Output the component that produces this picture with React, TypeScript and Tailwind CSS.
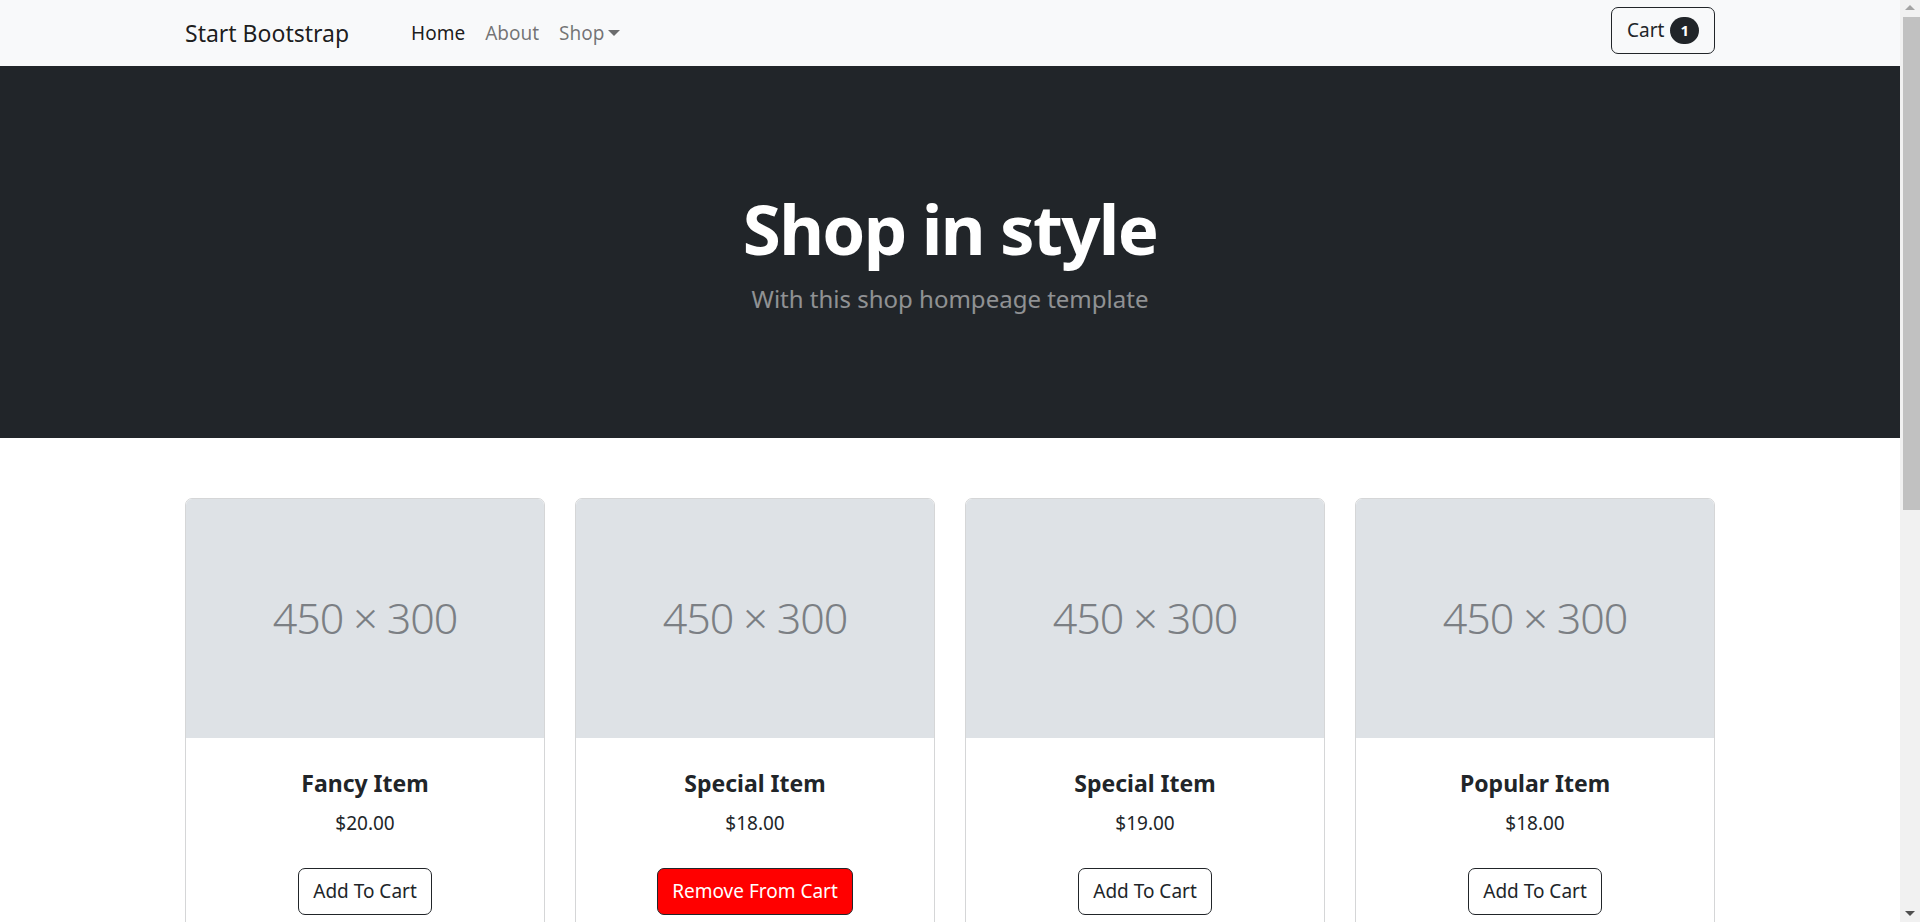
import { useState } from "react";

type Product = {
  id: number;
  name: string;
  price: number;
};

const products: Product[] = [
  { id: 1, name: "Fancy Item", price: 20 },
  { id: 2, name: "Special Item", price: 18 },
  { id: 3, name: "Special Item", price: 19 },
  { id: 4, name: "Popular Item", price: 18 },
  { id: 5, name: "Sale Item", price: 25 },
  { id: 6, name: "Fancy Product", price: 40 },
  { id: 7, name: "Sale Item", price: 18 },
  { id: 8, name: "Popular Item", price: 40 },
];

const font = { fontFamily: '"Noto Sans", "Segoe UI", sans-serif' };

function ProductCard({
  product,
  inCart,
  onToggle,
}: {
  product: Product;
  inCart: boolean;
  onToggle: () => void;
}) {
  return (
    <div className="flex flex-col rounded-[7px] border border-[#d5d6d7] bg-white overflow-hidden">
      <div className="h-[239px] bg-[#dee2e6] flex items-center justify-center">
        <span className="text-[43px] font-light text-[#7b7f84] tracking-tight">450 × 300</span>
      </div>
      <div className="p-[30px] text-center">
        <h5 className="text-[23px] leading-[30px] font-bold text-[#212529] mb-[10px]">{product.name}</h5>
        <div className="text-[19px] leading-[30px] text-[#212529]">${product.price.toFixed(2)}</div>
      </div>
      <div className="px-[30px] pb-[30px] text-center">
        {inCart ? (
          <button
            onClick={onToggle}
            className="h-[47px] px-[14px] rounded-[7px] border border-[#212529] bg-[#ff0000] text-white text-[19px]"
          >
            Remove From Cart
          </button>
        ) : (
          <button
            onClick={onToggle}
            className="h-[47px] px-[14px] rounded-[7px] border border-[#212529] bg-transparent text-[#212529] text-[19px] hover:bg-[#212529] hover:text-white"
          >
            Add To Cart
          </button>
        )}
      </div>
    </div>
  );
}

// the window scrollbar that shows in the screenshot
function Scrollbar() {
  return (
    <div className="fixed top-0 right-0 w-[20px] h-screen bg-[#f1f1f1] flex flex-col items-center">
      <svg width="10" height="5" viewBox="0 0 10 5" className="mt-[5px] shrink-0">
        <path d="M0 5 L5 0 L10 5 Z" fill="#a3a3a3" />
      </svg>
      <div className="mt-[7px] w-[17px] ml-[2px] h-[493px] bg-[#c1c1c1]" />
      <svg width="10" height="5" viewBox="0 0 10 5" className="mt-auto mb-[6px] shrink-0">
        <path d="M0 0 L10 0 L5 5 Z" fill="#505050" />
      </svg>
    </div>
  );
}

export default function App() {
  const [cart, setCart] = useState<number[]>([2]);

  const toggle = (id: number) => {
    setCart((prev) => (prev.includes(id) ? prev.filter((x) => x !== id) : [...prev, id]));
  };

  return (
    <div className="min-h-screen bg-white" style={font}>
      <div className="mr-[20px]">
        {/* navbar */}
        <nav className="bg-[#f8f9fa] h-[66px]">
          <div className="w-[1530px] mx-auto h-full flex items-center">
            <a className="text-[23px] text-[#000000e6] mr-[52px]">Start Bootstrap</a>
            <ul className="flex items-center text-[19px]">
              <li className="px-[10px] text-[#000000e6]">Home</li>
              <li className="px-[10px] text-[#0000008c]">About</li>
              <li className="px-[10px] text-[#0000008c] flex items-center">
                Shop
                <svg width="12" height="7" viewBox="0 0 12 7" className="ml-[4px] mt-[1px]">
                  <path d="M0 0 L12 0 L6 6 Z" fill="#6b6c6d" />
                </svg>
              </li>
            </ul>
            <button className="ml-auto mb-[5px] h-[47px] px-[15px] rounded-[7px] border border-[#212529] text-[#212529] text-[19px] flex items-center">
              Cart
              <span className="ml-[6px] bg-[#212529] text-white text-[15px] font-bold leading-none rounded-full px-[10px] py-[6px]">
                {cart.length}
              </span>
            </button>
          </div>
        </nav>

        {/* header */}
        <header className="bg-[#212529] py-[120px] text-center">
          <h1 className="text-[69px] leading-[84px] font-bold text-white mb-[10px] tracking-tight">Shop in style</h1>
          <p className="text-[24px] leading-[37.5px] text-[#ffffff80]">With this shop hompeage template</p>
        </header>

        {/* products */}
        <section className="py-[60px]">
          <div className="w-[1530px] mx-auto grid grid-cols-4 gap-x-[30px] gap-y-[60px]">
            {products.map((p) => (
              <ProductCard key={p.id} product={p} inCart={cart.includes(p.id)} onToggle={() => toggle(p.id)} />
            ))}
          </div>
        </section>

        {/* footer */}
        <footer className="bg-[#212529] py-[60px]">
          <p className="text-center text-white text-[19px] leading-[30px]">Copyright © Your Website 2023</p>
        </footer>
      </div>
      <Scrollbar />
    </div>
  );
}
